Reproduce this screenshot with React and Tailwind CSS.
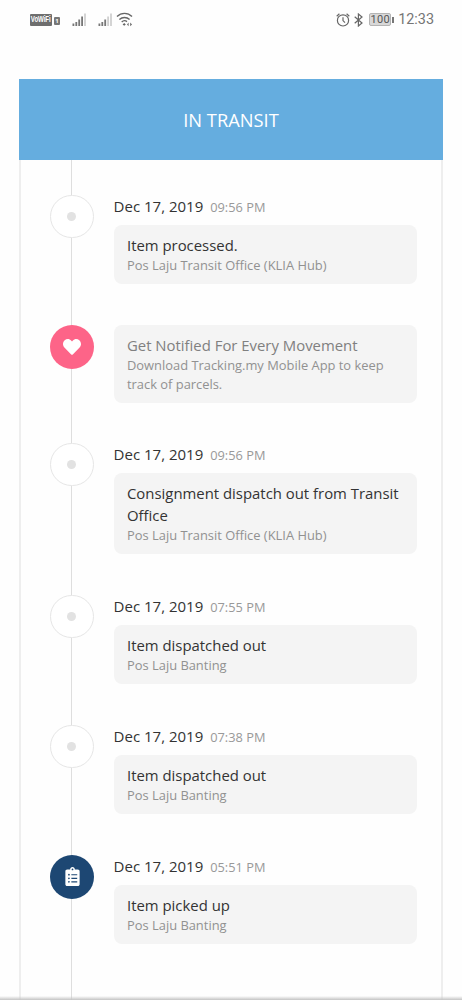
import { FaHeart, FaClipboardList } from 'react-icons/fa';

const EVENTS = [
  { date: 'Dec 17, 2019', time: '09:56 PM', title: 'Item processed.', place: 'Pos Laju Transit Office (KLIA Hub)' },
  {
    kind: 'promo',
    title: 'Get Notified For Every Movement',
    place: 'Download Tracking.my Mobile App to keep track of parcels.',
  },
  {
    date: 'Dec 17, 2019',
    time: '09:56 PM',
    title: 'Consignment dispatch out from Transit Office',
    place: 'Pos Laju Transit Office (KLIA Hub)',
  },
  { date: 'Dec 17, 2019', time: '07:55 PM', title: 'Item dispatched out', place: 'Pos Laju Banting' },
  { date: 'Dec 17, 2019', time: '07:38 PM', title: 'Item dispatched out', place: 'Pos Laju Banting' },
  { kind: 'pickup', date: 'Dec 17, 2019', time: '05:51 PM', title: 'Item picked up', place: 'Pos Laju Banting' },
];

// ── Status bar icons ───────────────────────────────────────
function Signal({ weak = false }) {
  const faint = '#d0d0d0';
  return (
    <svg width="15" height="14" viewBox="0 0 15 14" fill="#777">
      <rect x="0.5" y="10.5" width="1.8" height="2.5" />
      <rect x="3.4" y="9" width="1.8" height="4" />
      <rect x="6.3" y="6.5" width="1.8" height="6.5" />
      <rect x="9.2" y="3.5" width="1.8" height="9.5" fill={weak ? faint : '#777'} />
      <rect x="12.1" y="0.5" width="1.8" height="12.5" fill={faint} />
    </svg>
  );
}

function Wifi() {
  return (
    <svg width="17" height="15" viewBox="0 0 17 15" fill="none" stroke="#666" strokeWidth="1.4">
      <path d="M1 4.6C5.2 0.3 11.8 0.3 16 4.6" />
      <path d="M3.4 7.6C6.3 4.7 10.7 4.7 13.6 7.6" />
      <path d="M5.7 10C7.3 8.4 9.4 8.4 11 9.6" />
      <path d="M6.6 12.4L8.2 11L9.8 12.4L8.2 13.8Z M11 12.4L12.6 10.6V14.2Z M16 12.4L14.2 10.6V14.2Z" fill="#666" stroke="none" />
    </svg>
  );
}

function Alarm() {
  return (
    <svg width="14" height="14" viewBox="0 0 14 14" fill="none" stroke="#666" strokeWidth="1.2">
      <circle cx="7" cy="7.4" r="5.6" />
      <path d="M7 4.2V7.6L9 9.6M0.7 3.2L3.4 0.8M13.3 3.2L10.6 0.8" />
    </svg>
  );
}

function Bluetooth() {
  return (
    <svg width="9" height="14" viewBox="0 0 9 14" fill="none" stroke="#666" strokeWidth="1.2">
      <path d="M0.7 3.7L8 10L4.4 13V1L8 4L0.7 10.3" />
    </svg>
  );
}

function StatusBar() {
  return (
    <div className="flex h-[39px] items-center justify-between pr-[28px] pl-[30px] text-[#666]">
      <div className="flex items-center">
        <span className="flex h-[12px] w-[22px] items-center justify-center rounded-[1px] bg-[#6e6e6e] font-['Liberation_Sans'] text-white">
          <span className="scale-x-[0.72] text-[8.5px] leading-none font-bold tracking-[-0.1px]">VoWiFi</span>
        </span>
        <span className="mt-[3px] ml-[2px] flex h-[8px] w-[6px] items-center justify-center rounded-[1px] bg-[#777] text-[6px] leading-none font-bold text-white">
          1
        </span>
        <span className="ml-[12px]"><Signal /></span>
        <span className="ml-[11px]"><Signal weak /></span>
        <span className="ml-[3px]"><Wifi /></span>
      </div>
      <div className="flex items-center">
        <Alarm />
        <span className="ml-[4px]"><Bluetooth /></span>
        <span className="ml-[6px] flex h-[13px] w-[22px] items-center justify-center rounded-[2px] border border-[#b4b4b4] bg-[#d8d8d8] font-[Roboto] text-[11px] leading-none tracking-[0.3px] text-[#555]">
          100
        </span>
        <span className="ml-px h-[6px] w-[2px] bg-[#777]" />
        <span className="mt-[2px] ml-[4px] font-[Roboto] text-[14.4px] leading-none text-[#757575]">12:33</span>
      </div>
    </div>
  );
}

// ── Timeline ───────────────────────────────────────────────
function Marker({ kind }) {
  if (kind === 'promo') {
    return (
      <div className="mt-[-0.6px] flex size-[44px] items-center justify-center rounded-full bg-[#fd6488] text-white">
        <FaHeart size={18} />
      </div>
    );
  }
  if (kind === 'pickup') {
    return (
      <div className="mt-[-0.6px] flex size-[44px] items-center justify-center rounded-full bg-[#1d4773] text-white">
        <FaClipboardList size={19} />
      </div>
    );
  }
  return (
    <div className="mt-[-0.5px] flex size-[43.6px] items-center justify-center rounded-full border-[1.5px] border-[#e6e6e6] bg-white">
      <div className="size-[9px] rounded-full bg-[#e2e2e2]" />
    </div>
  );
}

function Event({ kind, date, time, title, place }) {
  const promo = kind === 'promo';
  return (
    <div className={`flex ${promo ? 'pb-[40.6px]' : 'pb-[41.5px]'}`}>
      <div className="z-10 w-[44px] shrink-0">
        <Marker kind={kind} />
      </div>
      <div className="ml-[19.6px] w-[303.4px]">
        {date && (
          <div className="flex h-[30px] items-baseline gap-[7px] leading-[22.5px]">
            <span className="text-[15px] text-[#333]">{date}</span>
            <span className="text-[12.8px] text-[#999]">{time}</span>
          </div>
        )}
        <div className="rounded-[8px] bg-[#f4f4f4] pt-[9px] pr-[13px] pb-[8.5px] pl-[13.4px]">
          <p className={`text-[14.9px] leading-[22px] ${promo ? '-mt-[0.6px] mb-[0.6px] text-[#808080]' : 'text-[#333]'}`}>
            {title}
          </p>
          <p className={`text-[12.9px] leading-[19px] text-[#919191] ${promo ? '-mt-[0.6px] mb-[0.6px]' : ''}`}>{place}</p>
        </div>
      </div>
    </div>
  );
}

export default function App() {
  return (
    <div className="relative flex h-[1000px] w-[462px] flex-col overflow-hidden bg-[#fefefe] font-['Open_Sans',sans-serif]">
      <StatusBar />
      <div className="mx-[19px] mt-[40.4px] flex min-h-0 flex-1 flex-col">
        <div className="flex h-[80.8px] shrink-0 items-center justify-center bg-[#65addf] pb-px text-[18.3px] text-white">
          IN TRANSIT
        </div>
        <div className="relative min-h-0 flex-1 border-x-2 border-[#eeeeee] pt-[35px] pl-[29px]">
          {/* vertical line behind the markers */}
          <div className="absolute top-0 bottom-0 left-[50px] w-px bg-[#dedede]" />
          {EVENTS.map((event, i) => (
            <Event key={i} {...event} />
          ))}
        </div>
      </div>
      <div className="absolute inset-x-0 bottom-0 h-[4px] bg-linear-to-b from-transparent to-[#c4c4c4]" />
    </div>
  );
}
